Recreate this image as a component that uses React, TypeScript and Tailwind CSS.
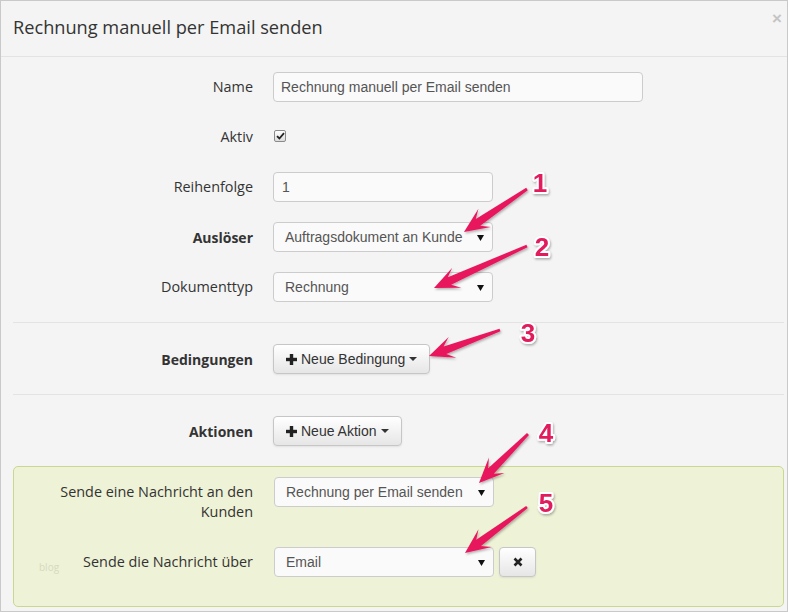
import React from 'react';

const arrows = [
  { x1: 527, y1: 189, x2: 464, y2: 232 },
  { x1: 527, y1: 246, x2: 434, y2: 288 },
  { x1: 500, y1: 330, x2: 429, y2: 356 },
  { x1: 528, y1: 434, x2: 479, y2: 483 },
  { x1: 527, y1: 507, x2: 465, y2: 553 },
];

const numbers = [
  { n: '1', x: 540, y: 192 },
  { n: '2', x: 542, y: 256 },
  { n: '3', x: 528, y: 342 },
  { n: '4', x: 546, y: 442 },
  { n: '5', x: 546, y: 512 },
];

function Arrow({ x1, y1, x2, y2 }: { x1: number; y1: number; x2: number; y2: number }) {
  const L = Math.hypot(x2 - x1, y2 - y1);
  const deg = (Math.atan2(y2 - y1, x2 - x1) * 180) / Math.PI;
  const pts = [
    [0, -1.4],
    [L - 17, -4],
    [L - 25, -11],
    [L, 0],
    [L - 25, 11],
    [L - 17, 4],
    [0, 1.4],
  ]
    .map(p => p.join(','))
    .join(' ');
  return <polygon points={pts} fill="#e8195c" transform={`translate(${x1} ${y1}) rotate(${deg})`} />;
}

function Caret() {
  return (
    <svg width="7" height="7" viewBox="0 0 7 7">
      <polygon points="0,1 7,1 3.5,7" fill="#111" />
    </svg>
  );
}

function Select({ value, className = '' }: { value: string; className?: string }) {
  return (
    <div
      className={`flex h-[30px] w-[220px] items-center justify-between rounded-[4px] border border-[#cccccc] bg-[#fafafa] pl-[11px] pr-[8px] font-['Liberation_Sans',Arial,sans-serif] text-[14px] text-[#555] ${className}`}
    >
      <span>{value}</span>
      <Caret />
    </div>
  );
}

function Btn({ label }: { label: string }) {
  return (
    <div className="flex h-[30px] items-center rounded-[4px] border border-[#c6c6c6] bg-linear-to-b from-white to-[#e6e6e6] pl-[12px] pr-[12px] font-['Liberation_Sans',Arial,sans-serif] text-[14px] text-[#333] shadow-[0_1px_2px_rgba(0,0,0,0.08)]">
      <svg width="11" height="11" viewBox="0 0 11 11" className="mr-[4px]">
        <rect x="3.8" y="0" width="3.4" height="11" fill="#222" />
        <rect x="0" y="3.8" width="11" height="3.4" fill="#222" />
      </svg>
      <span>{label}</span>
      <svg width="8" height="4" viewBox="0 0 8 4" className="ml-[4px]">
        <polygon points="0,0 8,0 4,4" fill="#333" />
      </svg>
    </div>
  );
}

function Row({ label, bold = false, children }: { label: string; bold?: boolean; children: React.ReactNode }) {
  return (
    <div className="flex h-[30px] items-center">
      <div className={`w-[240px] text-right ${bold ? 'text-[14px] font-bold' : ''}`}>{label}</div>
      <div className="ml-[20px] flex items-center">{children}</div>
    </div>
  );
}

export default function App() {
  return (
    <div className="relative h-[612px] w-[788px] overflow-hidden border border-[#c9c9c9] bg-[#f4f4f4] font-['Open_Sans',sans-serif] text-[14.4px] text-[#333]">
      {/* Header */}
      <div className="flex h-[56px] items-center justify-between border-b border-[#e3e3e3] pl-[12px] pr-[5px]">
        <h1 className="mb-[2px] text-[18.2px] text-[#333]">Rechnung manuell per Email senden</h1>
        <span className="mb-[20px] font-['Liberation_Sans',Arial,sans-serif] text-[17px] font-bold leading-none text-[#c4c4c4]">×</span>
      </div>

      {/* Body */}
      <div className="pl-[12px] pr-[3px] pt-[15px]">
        <div className="flex flex-col gap-[20px]">
          <Row label="Name">
            <div className="flex h-[30px] w-[370px] items-center rounded-[4px] border border-[#cccccc] bg-[#fafafa] px-[7px] font-['Liberation_Sans',Arial,sans-serif] text-[14px] text-[#555]">
              Rechnung manuell per Email senden
            </div>
          </Row>
          <Row label="Aktiv">
            <div className="ml-[1px] mt-[-2px] flex h-[12px] w-[12px] items-center justify-center rounded-[2px] border border-[#8a8a8a] bg-linear-to-b from-white to-[#dcdcdc]">
              <svg width="9" height="8" viewBox="0 0 9 8">
                <path d="M1 4.2 L3.4 6.5 L8 1.2" stroke="#222" strokeWidth="1.8" fill="none" />
              </svg>
            </div>
          </Row>
          <Row label="Reihenfolge">
            <div className="flex h-[30px] w-[220px] items-center rounded-[4px] border border-[#cccccc] bg-[#fafafa] px-[8px] font-['Liberation_Sans',Arial,sans-serif] text-[14px] text-[#555]">
              1
            </div>
          </Row>
          <Row label="Auslöser" bold>
            <Select value="Auftragsdokument an Kunde" />
          </Row>
          <Row label="Dokumenttyp">
            <Select value="Rechnung" />
          </Row>
        </div>

        <div className="mt-[20px] border-t border-[#e3e3e3]" />
        <div className="mt-[21px]">
          <Row label="Bedingungen" bold>
            <Btn label="Neue Bedingung" />
          </Row>
        </div>
        <div className="mt-[20px] border-t border-[#e3e3e3]" />
        <div className="mt-[21px]">
          <Row label="Aktionen" bold>
            <Btn label="Neue Aktion" />
          </Row>
        </div>

        {/* Action panel */}
        <div className="mt-[20px] rounded-[5px] border border-[#c8d98f] bg-[#eef2d6] pb-[29px] pt-[10px]">
          <div className="flex items-start">
            <div className="w-[239px] pt-[5px] text-right leading-[20px]">
              Sende eine Nachricht an den
              <br />
              Kunden
            </div>
            <Select value="Rechnung per Email senden" className="ml-[21px]" />
          </div>
          <div className="mt-[25px] flex items-center">
            <div className="flex w-[239px] items-center">
              <span className="ml-[25px] mt-[10px] text-[10px] text-[#d6dabf]">blog</span>
              <span className="ml-auto">Sende die Nachricht über</span>
            </div>
            <Select value="Email" className="ml-[21px]" />
            <div className="ml-[5px] flex h-[30px] w-[37px] items-center justify-center rounded-[4px] border border-[#c6c6c6] bg-linear-to-b from-white to-[#e6e6e6] shadow-[0_1px_2px_rgba(0,0,0,0.08)]">
              <svg width="10" height="10" viewBox="0 0 10 10">
                <path d="M1.5 1.5 L8.5 8.5 M8.5 1.5 L1.5 8.5" stroke="#222" strokeWidth="2.6" />
              </svg>
            </div>
          </div>
        </div>
      </div>

      {/* Annotation overlay */}
      <svg className="pointer-events-none absolute left-[-1px] top-[-1px]" width="788" height="612" viewBox="0 0 788 612">
        <defs>
          <filter id="sh" x="-20%" y="-20%" width="140%" height="140%">
            <feDropShadow dx="1" dy="1.5" stdDeviation="1" floodColor="#000" floodOpacity="0.3" />
          </filter>
        </defs>
        <g filter="url(#sh)">
          {arrows.map((a, i) => (
            <Arrow key={i} {...a} />
          ))}
        </g>
        <g filter="url(#sh)">
          {numbers.map(t => (
            <text
              key={t.n}
              x={t.x}
              y={t.y}
              textAnchor="middle"
              fontFamily="'Liberation Sans', Arial, sans-serif"
              fontWeight="bold"
              fontSize="26"
              fill="#e01a5b"
              stroke="#fff"
              strokeWidth="4"
              strokeLinejoin="round"
              paintOrder="stroke"
            >
              {t.n}
            </text>
          ))}
        </g>
      </svg>
    </div>
  );
}
